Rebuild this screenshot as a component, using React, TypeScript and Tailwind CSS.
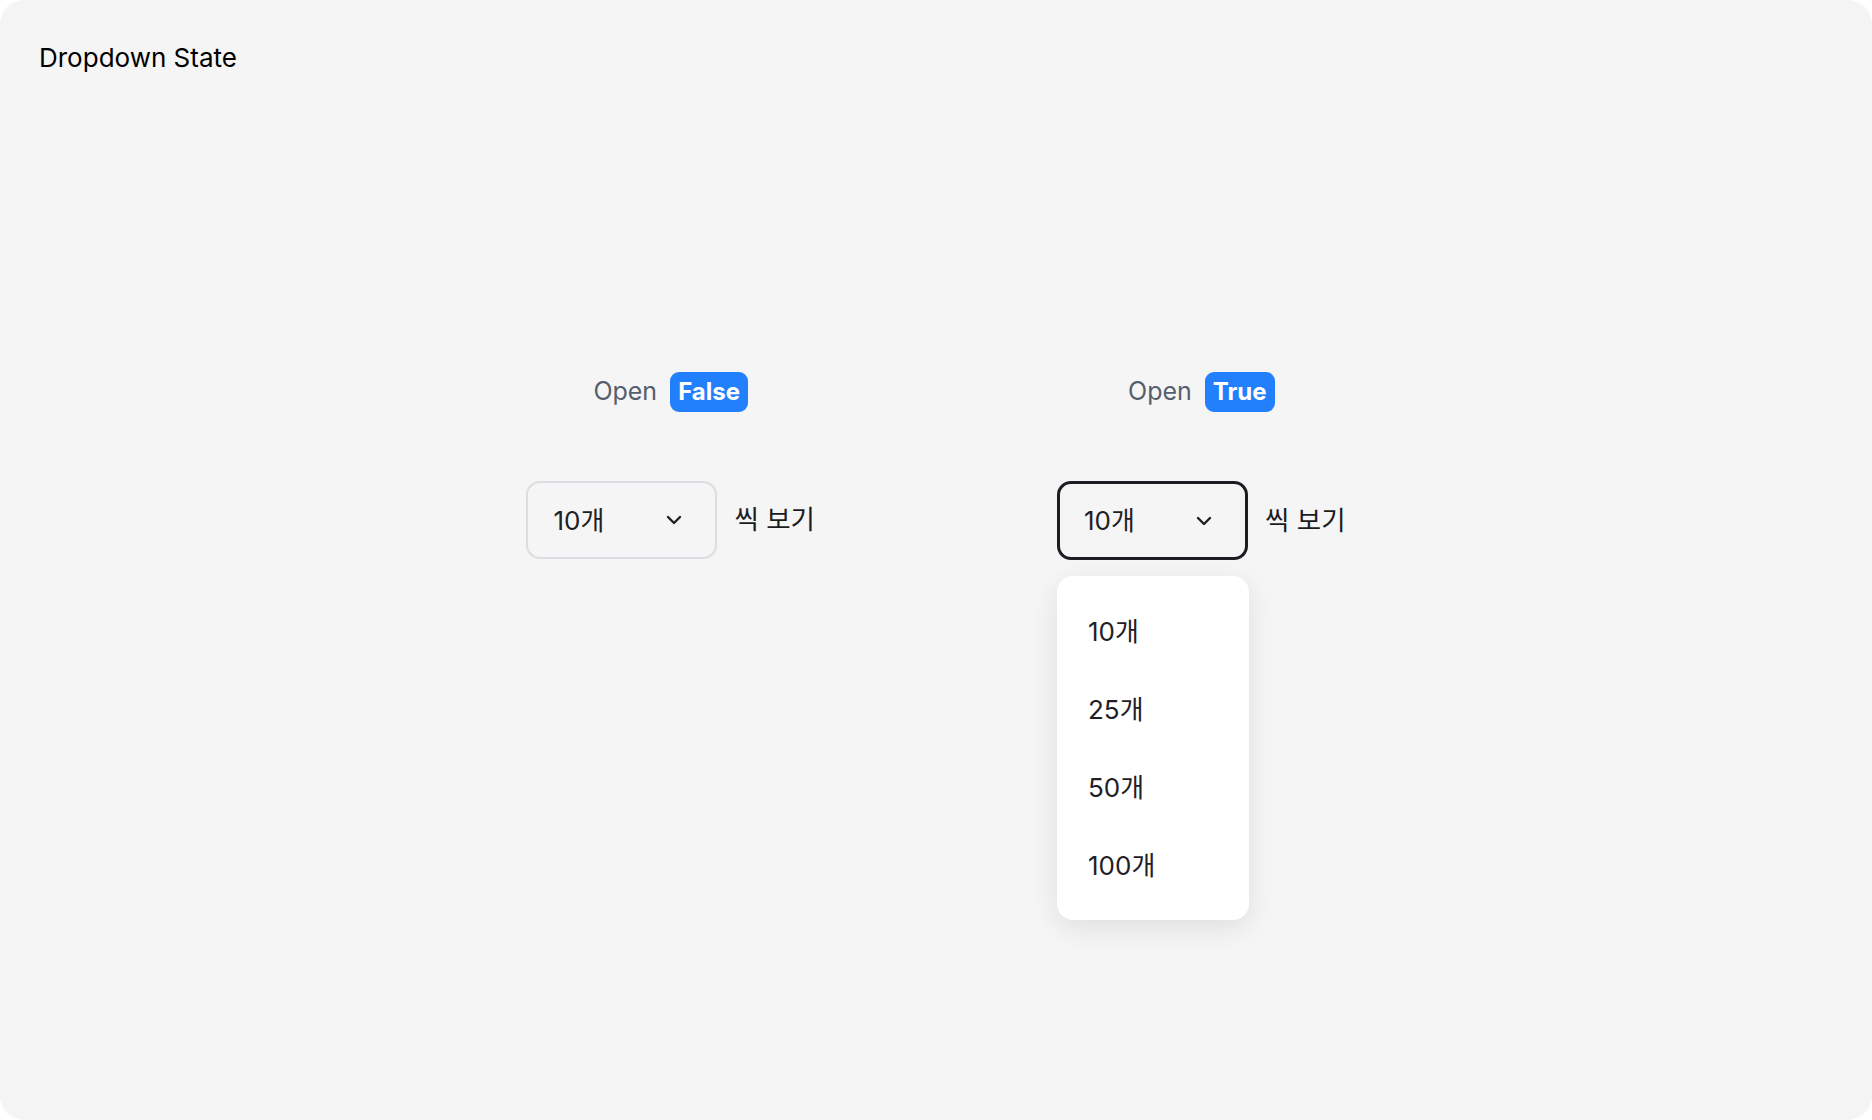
const options = ['10개', '25개', '50개', '100개'];

const Chevron = () => (
  <svg width="16" height="10" viewBox="0 0 16 10" fill="none" className="shrink-0">
    <path d="M2 2L8 8L14 2" stroke="#1f2026" strokeWidth="2.4" strokeLinecap="round" strokeLinejoin="round" />
  </svg>
);

const StateLabel = ({ value }: { value: string }) => (
  <div className="flex items-center gap-[13px] h-10">
    <span className="text-[25px] text-[#565e6d]">Open</span>
    <span className="h-10 px-[8px] flex items-center rounded-[9px] bg-[#2280fd] text-white text-[24px] font-bold">
      {value}
    </span>
  </div>
);

const PageSizeSelect = ({ open }: { open: boolean }) => (
  <div className="flex items-center gap-[17px]">
    <div className="relative">
      <button
        className={
          open
            ? 'w-[191px] h-[79px] flex items-center justify-between rounded-[14px] border-[3px] border-[#1c1d22] pl-[24px] pr-[33px] text-[26px] text-[#1f2026]'
            : 'w-[191px] h-[78px] flex items-center justify-between rounded-[14px] border-2 border-[#dcdce2] pl-[25px] pr-[33px] text-[26px] text-[#1f2026]'
        }
      >
        <span>10개</span>
        <Chevron />
      </button>

      {/* Menu */}
      {open && (
        <div className="absolute left-0 top-full mt-4 w-[192px] py-4 rounded-2xl bg-white shadow-[0_8px_28px_rgba(0,0,0,0.09)]">
          {options.map((o) => (
            <div key={o} className="h-[78px] flex items-center pl-[31px] text-[26px] text-[#1f2026]">
              {o}
            </div>
          ))}
        </div>
      )}
    </div>
    <span className="text-[26.5px] text-[#1c1c1e]">씩 보기</span>
  </div>
);

export default function App() {
  return (
    <div
      className="w-[1872px] h-[1120px] bg-white"
      style={{ fontFamily: 'Inter, "Noto Sans CJK KR", sans-serif' }}
    >
      <div className="h-full rounded-[24px] bg-[#f5f5f5] px-[39px] pt-[38px]">
        <h1 className="text-[26px] leading-[1.5] text-black">Dropdown State</h1>

        <div className="mt-[295px] flex justify-center gap-[242px]">
          <div className="flex flex-col items-center gap-[69px]">
            <StateLabel value="False" />
            <PageSizeSelect open={false} />
          </div>
          <div className="flex flex-col items-center gap-[69px]">
            <StateLabel value="True" />
            <PageSizeSelect open={true} />
          </div>
        </div>
      </div>
    </div>
  );
}
